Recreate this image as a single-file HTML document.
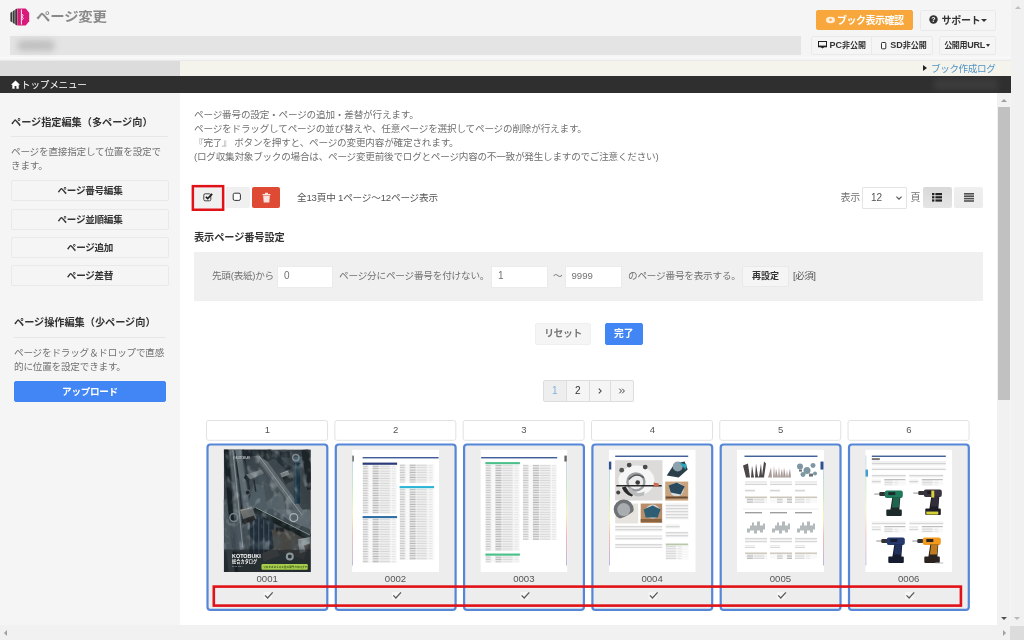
<!DOCTYPE html>
<html lang="ja">
<head>
<meta charset="utf-8">
<title>ページ変更</title>
<style>
*{box-sizing:border-box;margin:0;padding:0}
html,body{width:1024px;height:640px;overflow:hidden;background:#f5f5f5}
body{position:relative;font-family:"Liberation Sans","Noto Sans CJK JP",sans-serif;font-size:10px;color:#555;line-height:1}
#wrap{position:absolute;left:0;top:0;width:1024px;height:640px;overflow:hidden;will-change:transform}
.abs{position:absolute}
.btn{position:absolute;background:#f5f5f5;border:1px solid #e9e9e9;border-radius:2px;color:#333;font-weight:bold;text-align:center;white-space:nowrap}
.t{position:absolute;white-space:nowrap}
/* header */
#title{left:36px;top:8px;font-size:13px;font-weight:700;color:#8a8a8a;line-height:18px;letter-spacing:-.2px;transform:scaleX(1.11);transform-origin:0 0}
#graybar{left:10.4px;top:36px;width:791.1px;height:19.2px;background:#e4e4e4}
#blur{left:17px;top:40px;width:38px;height:11px;border-radius:6px;background:#c0c0c0;filter:blur(3px)}
#band-l{left:0;top:61px;width:179.5px;height:15px;background:#dcdcdc}
#band-r{left:179.5px;top:61px;width:831px;height:15px;background:#f5f4ec}
#dark{left:0;top:76px;width:1010.5px;height:16.8px;background:#2f2f2f;overflow:hidden}
#side{left:0;top:93px;width:179.5px;height:532px;background:#f5f5f5}
#main{left:179.5px;top:92.8px;width:818px;height:532.2px;background:#fff}
/* scrollbars */
#vs-in{left:997.4px;top:93px;width:13.1px;height:532px;background:#f1f1f1}
#vs-in .thumb{position:absolute;left:1px;top:14px;width:11.2px;height:293px;background:#c1c1c1}
#vs-out{left:1010.5px;top:0;width:13.5px;height:625px;background:#f1f1f1}
#hs{left:0;top:625px;width:1024px;height:15px;background:#f1f1f1}
#corner{left:1010.25px;top:626px;width:13.75px;height:14px;background:#dcdcdc}
.tri{position:absolute;width:0;height:0;border:3px solid transparent}
/* cards */
.num{position:absolute;top:420px;width:121.75px;height:20.6px;background:#fff;border:1px solid #e2e2e2;border-radius:2px;text-align:center;line-height:19px;font-size:9.5px;color:#555}
.card{position:absolute;top:443.3px;width:121.75px;height:167.7px;background:#ededed;border:2.3px solid #4f88de;border-radius:4px}
.card .pg{position:absolute;left:15.1px;top:4px;width:87px;height:122.5px;background:#fff;overflow:hidden}
.card .lbl{position:absolute;left:0;width:117.2px;top:128.5px;text-align:center;font-size:9px;line-height:10px;color:#555}
.card svg.ck{position:absolute;left:53.6px;top:145.5px}
</style>
</head>
<body>
<div id="wrap">
<!-- header -->
<svg class="abs" style="left:10px;top:7.5px" width="20" height="18" viewBox="0 0 20 18">
  <path d="M0.4 4.8L2.4 3.4V14.600L0.4 13.200Z" fill="#3a3a3a"/>
  <path d="M2.9 3.100L4.700 1.900V16.100L2.900 14.900Z" fill="#3a3a3a"/>
  <path d="M5.200 1.600L7 0.500V17.500L5.200 16.400Z" fill="#3a3a3a"/>
  <path d="M7.300 0.400H15.700L19.200 4.800V13.200L15.700 17.600H7.300Z" fill="#d81b7a"/>
  <path d="M11.400 1.500V16.500" stroke="#fff" stroke-width="1" opacity=".9" fill="none"/>
  <path d="M12 6.200q2.400.4 0 2.800q2.800.6 0 3" stroke="#fff" stroke-width=".9" opacity=".9" fill="none"/>
</svg>
<div class="t" id="title">ページ変更</div>
<div class="abs" id="graybar"></div>
<div class="abs" id="blur"></div>

<div class="btn" style="left:816px;top:10px;width:96.500px;height:20.300px;background:#f8a73c;border-color:#f8a73c;color:#fff;font-size:10px;line-height:19px;letter-spacing:-.5px;padding-left:12px">ブック表示確認</div>
<svg class="abs" style="left:826px;top:16px" width="9" height="8" viewBox="0 0 9 8"><ellipse cx="4.5" cy="4" rx="4.500" ry="3.200" fill="#fff" opacity=".8"/><circle cx="4.5" cy="3.800" r="1.300" fill="#f8a73c"/></svg>
<div class="btn" style="left:920px;top:10px;width:76px;height:21px;font-size:10px;line-height:19px;padding-left:6px;letter-spacing:-.3px">サポート</div>
<svg class="abs" style="left:929px;top:15px" width="9" height="9" viewBox="0 0 9 9"><circle cx="4.5" cy="4.5" r="4.2" fill="#333"/><text x="4.5" y="7.2" font-size="7" font-weight="bold" fill="#fff" text-anchor="middle" font-family="Liberation Sans, sans-serif">?</text></svg>
<div class="tri" style="left:981px;top:19px;border-top-color:#333;border-bottom-width:0"></div>

<div class="btn" style="left:811px;top:36px;width:61px;height:19px;font-size:8px;line-height:17px;padding-left:12.500px;border-radius:2px 0 0 2px"><span style="font-size:9px">PC</span>非公開</div>
<svg class="abs" style="left:818px;top:41px" width="9" height="8" viewBox="0 0 9 8"><rect x=".5" y=".5" width="8" height="5.200" fill="#f4f4f4" stroke="#222" stroke-width="1"/><rect x="0" y="4.600" width="9" height="1.500" fill="#222"/><path d="M2.600 6.100h3.800l-1.900 1.500z" fill="#222"/></svg>
<div class="btn" style="left:871px;top:36px;width:62px;height:19px;font-size:8px;line-height:17px;padding-left:13px;border-radius:0 2px 2px 0"><span style="font-size:9px">SD</span>非公開</div>
<svg class="abs" style="left:880.500px;top:41.500px" width="6" height="8" viewBox="0 0 6 8"><rect x=".5" y=".5" width="4.300" height="6.300" rx=".8" fill="#fff" stroke="#333" stroke-width="1"/></svg>
<div class="btn" style="left:939px;top:36px;width:57px;height:19px;font-size:8px;line-height:17px;padding-right:6px;letter-spacing:-.3px">公開用<span style="font-size:9px">URL</span></div>
<div class="tri" style="left:986px;top:44px;border-top-color:#333;border-bottom-width:0;border-width:3px 2.5px 0"></div>

<div class="abs" style="left:0;top:56.500px;width:1010.500px;height:1.500px;background:#fbfbfb"></div><div class="abs" style="left:0;top:60px;width:1010.500px;height:1px;background:#e9e9e9"></div>
<div class="abs" id="band-l"></div>
<div class="abs" id="band-r"></div>
<div class="tri" style="left:923px;top:65px;border-width:3px 0 3px 4px;border-left-color:#222"></div>
<div class="t" style="left:931px;top:62px;font-size:9.6px;line-height:13px;color:#4f93c4;letter-spacing:-.4px">ブック作成ログ</div>
<div class="abs" id="dark"><div class="abs" style="left:934px;top:3px;width:64px;height:11px;background:#3d3d3d;filter:blur(3px)"></div></div>
<svg class="abs" style="left:11px;top:80px" width="9" height="9" viewBox="0 0 9 9"><path d="M4.5 0.5 L0 4.8 H1.3 V8.7 H3.6 V6 H5.4 V8.7 H7.7 V4.8 H9 Z" fill="#fff"/></svg>
<div class="t" style="left:21px;top:78px;font-size:9.6px;line-height:13px;color:#fff;letter-spacing:-.2px">トップメニュー</div>

<!-- sidebar -->
<div class="abs" id="side"></div>
<div class="t" style="left:11px;top:115.7px;font-size:10.2px;line-height:14px;font-weight:bold;color:#333;letter-spacing:-.05px">ページ指定編集（多ページ向）</div>
<div class="abs" style="left:11px;top:136px;width:157px;height:1px;background:#e6e6e6"></div>
<div class="abs" style="left:11px;top:144.7px;width:165px;font-size:9.6px;line-height:14.3px;color:#717171;letter-spacing:-.2px">ページを直接指定して位置を設定で<br>きます。</div>
<div class="btn" style="left:11px;top:180px;width:158px;height:21px;font-size:9.6px;line-height:19px;letter-spacing:-.3px">ページ番号編集</div>
<div class="btn" style="left:11px;top:208.5px;width:158px;height:21px;font-size:9.6px;line-height:19px;letter-spacing:-.3px">ページ並順編集</div>
<div class="btn" style="left:11px;top:237px;width:158px;height:21px;font-size:9.6px;line-height:19px;letter-spacing:-.3px">ページ追加</div>
<div class="btn" style="left:11px;top:265px;width:158px;height:21px;font-size:9.6px;line-height:19px;letter-spacing:-.3px">ページ差替</div>
<div class="t" style="left:14px;top:315.7px;font-size:10.2px;line-height:14px;font-weight:bold;color:#333;letter-spacing:-.05px">ページ操作編集（少ページ向）</div>
<div class="abs" style="left:14px;top:337px;width:152px;height:1px;background:#e6e6e6"></div>
<div class="abs" style="left:14px;top:345.7px;width:165px;font-size:9.6px;line-height:14.3px;color:#717171;letter-spacing:-.2px">ページをドラッグ＆ドロップで直感<br>的に位置を設定できます。</div>
<div class="btn" style="left:14px;top:381px;width:152px;height:21px;background:#4285f4;border-color:#4285f4;color:#fff;font-size:9.6px;line-height:19px;letter-spacing:-.3px">アップロード</div>

<!-- main -->
<div class="abs" id="main"></div>
<div class="abs" style="left:194px;top:107.6px;width:700px;font-size:9.6px;line-height:14.3px;color:#717171;letter-spacing:-.18px;white-space:nowrap">ページ番号の設定・ページの追加・差替が行えます。<br>ページをドラッグしてページの並び替えや、任意ページを選択してページの削除が行えます。<br>『完了』 ボタンを押すと、ページの変更内容が確定されます。<br><span style="letter-spacing:-.23px">(ログ収集対象ブックの場合は、ページ変更前後でログとページ内容の不一致が発生しますのでご注意ください)</span></div>

<svg class="abs" style="left:190px;top:183px" width="37" height="30" viewBox="0 0 37 30"><rect x="2.850" y="3.150" width="30.300" height="23.600" fill="#f0f0f0" stroke="#e01218" stroke-width="2.500"/></svg>
<svg class="abs" style="left:203px;top:192px" width="10" height="10" viewBox="0 0 10 10"><rect x=".8" y="1.8" width="7" height="7" rx="1.3" fill="none" stroke="#444" stroke-width="1"/><path d="M2.800 4.800l1.900 1.700L9.200 1.800" stroke="#222" stroke-width="1.700" fill="none"/></svg>
<div class="abs" style="left:225.6px;top:187.3px;width:24.2px;height:21px;background:#f0f0f0;border-radius:0 2px 2px 0"></div>
<svg class="abs" style="left:232px;top:192px" width="10" height="10" viewBox="0 0 10 10"><rect x="1.2" y="1.2" width="7.2" height="7.2" rx="1.5" fill="#fff" stroke="#333" stroke-width="1"/></svg>
<div class="abs" style="left:252px;top:187.3px;width:28.3px;height:21px;background:#de4a33;border-radius:2px"></div>
<svg class="abs" style="left:262px;top:192px" width="9" height="11" viewBox="0 0 9 11"><path d="M0.5 2h8v1.2h-8zM3 0.7h3v1.3h-3zM1.2 3.8h6.6l-.5 6.7h-5.6z" fill="#fff" opacity=".85"/></svg>
<div class="t" style="left:297px;top:191px;font-size:9.6px;line-height:14px;color:#555;letter-spacing:-.18px">全13頁中 1ページ～12ページ表示</div>

<div class="t" style="left:840.500px;top:191px;font-size:10px;line-height:14px;color:#707070;letter-spacing:-.2px">表示</div>
<div class="abs" style="left:862px;top:187px;width:45px;height:22px;background:#fff;border:1px solid #e4e4e4;border-radius:1px"></div>
<div class="t" style="left:871px;top:192px;font-size:10px;line-height:12px;color:#555">12</div>
<svg class="abs" style="left:895px;top:195px" width="8" height="6" viewBox="0 0 8 6"><path d="M1.400 1.600l2.600 2.600 2.600-2.600" stroke="#555" stroke-width="1.100" fill="none"/></svg>
<div class="t" style="left:910.500px;top:191px;font-size:10px;line-height:14px;color:#707070">頁</div>
<div class="abs" style="left:922.600px;top:187.400px;width:29px;height:21.100px;background:linear-gradient(#d9d9d9,#e5e5e5);border-radius:2px"></div>
<svg class="abs" style="left:932px;top:193px" width="10" height="9" viewBox="0 0 10 9"><g fill="#222"><rect x="0" y="0" width="2.4" height="2.2"/><rect x="3.4" y="0" width="6.6" height="2.2"/><rect x="0" y="3.2" width="2.4" height="2.2"/><rect x="3.4" y="3.2" width="6.6" height="2.2"/><rect x="0" y="6.4" width="2.4" height="2.2"/><rect x="3.4" y="6.4" width="6.6" height="2.2"/></g></svg>
<div class="abs" style="left:954.200px;top:187.400px;width:28.600px;height:21.100px;background:linear-gradient(#efefef,#ebebeb);border-radius:2px"></div>
<svg class="abs" style="left:964px;top:193px" width="10" height="9" viewBox="0 0 10 9"><g fill="#505050"><rect x="0" y="0" width="10" height="1.6"/><rect x="0" y="2.4" width="10" height="1.6"/><rect x="0" y="4.8" width="10" height="1.6"/><rect x="0" y="7.2" width="10" height="1.6"/></g></svg>

<div class="t" style="left:194px;top:230.7px;font-size:10.2px;line-height:14px;font-weight:bold;color:#333;letter-spacing:-.1px">表示ページ番号設定</div>
<div class="abs" style="left:194px;top:252px;width:789px;height:49px;background:#f0f0f0"></div>
<div class="t" style="left:212px;top:269px;font-size:9.6px;line-height:14px;color:#717171;letter-spacing:-.25px">先頭(表紙)から</div>
<div class="abs" style="left:277px;top:266px;width:56px;height:22px;background:#fff;border:1px solid #ebebeb"></div>
<div class="t" style="left:284px;top:270.300px;font-size:10px;line-height:12px;color:#717171">0</div>
<div class="t" style="left:339px;top:269px;font-size:9.6px;line-height:14px;color:#717171;letter-spacing:-.18px">ページ分にページ番号を付けない。</div>
<div class="abs" style="left:491px;top:266px;width:57px;height:22px;background:#fff;border:1px solid #ebebeb"></div>
<div class="t" style="left:498px;top:270.300px;font-size:10px;line-height:12px;color:#717171">1</div>
<div class="t" style="left:553px;top:269px;font-size:9.6px;line-height:14px;color:#717171">～</div>
<div class="abs" style="left:565px;top:266px;width:57px;height:22px;background:#fff;border:1px solid #ebebeb"></div>
<div class="t" style="left:571.500px;top:270.300px;font-size:9.600px;line-height:12px;color:#717171">9999</div>
<div class="t" style="left:628px;top:269px;font-size:9.6px;line-height:14px;color:#717171;letter-spacing:-.18px">のページ番号を表示する。</div>
<div class="btn" style="left:742px;top:266px;width:47px;height:21px;font-size:9px;line-height:19px">再設定</div>
<div class="t" style="left:793px;top:269px;font-size:9.6px;line-height:14px;color:#555;letter-spacing:-.5px">[必須]</div>

<div class="btn" style="left:535px;top:323px;width:56px;height:22px;font-size:9.8px;line-height:20px;color:#777;letter-spacing:-.4px;border-color:#efefef">リセット</div>
<div class="btn" style="left:605px;top:323px;width:37.500px;height:22px;background:#4285f4;border-color:#4285f4;color:#fff;font-size:9.8px;line-height:20px">完了</div>

<div class="abs" style="left:543px;top:380px;width:91px;height:22px;background:#f5f5f5;border:1px solid #ddd;border-radius:2px"></div>
<div class="abs" style="left:544px;top:381px;width:22px;height:20px;background:#eee"></div>
<div class="abs" style="left:566px;top:381px;width:1px;height:20px;background:#ddd"></div>
<div class="abs" style="left:589px;top:381px;width:1px;height:20px;background:#ddd"></div>
<div class="abs" style="left:610px;top:381px;width:1px;height:20px;background:#ddd"></div>
<div class="t" style="left:552px;top:385px;font-size:10px;line-height:12px;color:#7fb0e0">1</div>
<div class="t" style="left:575px;top:385px;font-size:10px;line-height:12px;color:#333">2</div>
<svg class="abs" style="left:597px;top:387px" width="6" height="8" viewBox="0 0 6 8"><path d="M1.800 1.600L4.100 4 1.800 6.400" stroke="#444" stroke-width="1.050" fill="none"/></svg>
<svg class="abs" style="left:618px;top:387px" width="8" height="8" viewBox="0 0 8 8"><path d="M1.300 1.700L3.500 4 1.300 6.300M4.200 1.700L6.400 4 4.200 6.300" stroke="#444" stroke-width="1" fill="none"/></svg>

<!-- CARDS -->
<!--CARDS-->
<svg width="0" height="0" style="position:absolute"><defs>
<pattern id="rw" width="40" height="2.45" patternUnits="userSpaceOnUse"><rect width="40" height="2.45" fill="#fafafa"/><rect x="0" y=".5" width="5.500" height="1.300" fill="#c6c6c6"/><rect x="10" y=".5" width="6" height="1.300" fill="#b4b4b4"/><rect x="16.500" y=".5" width="11" height="1.300" fill="#d6d6d6"/><rect x="29" y=".7" width="4" height="1" fill="#e4e4e4"/><rect y="2.250" width="40" height=".2" fill="#e6e6e6"/></pattern>
<pattern id="tx" width="80" height="1.500" patternUnits="userSpaceOnUse"><rect width="80" height=".7" fill="#cfcfcf"/></pattern>
<linearGradient id="rb" x1="0" y1="0" x2="0" y2="1"><stop offset="0" stop-color="#9bd"/><stop offset=".25" stop-color="#9d9"/><stop offset=".5" stop-color="#ee8"/><stop offset=".7" stop-color="#e88"/><stop offset="1" stop-color="#88c"/></linearGradient>
<filter id="nz" x="0" y="0" width="1" height="1"><feTurbulence type="fractalNoise" baseFrequency=".09 .07" numOctaves="2" seed="7"/><feColorMatrix type="matrix" values="0 0 0 0 0.07  0 0 0 0 0.1  0 0 0 0 0.12  -2.400 0 0 0 1.300"/></filter><filter id="nw" x="0" y="0" width="1" height="1"><feTurbulence type="fractalNoise" baseFrequency=".13 .1" numOctaves="2" seed="11"/><feColorMatrix type="matrix" values="0 0 0 0 0.62  0 0 0 0 0.68  0 0 0 0 0.72  0 2.400 0 0 -1.300"/></filter><filter id="bl" x="0" y="0" width="1" height="1"><feGaussianBlur stdDeviation=".45"/></filter><radialGradient id="cv" cx=".5" cy=".45" r=".75"><stop offset="0" stop-color="#6a777e" stop-opacity=".5"/><stop offset="1" stop-color="#1e2529" stop-opacity=".5"/></radialGradient>
</defs></svg>

<svg class="abs" style="left:0;top:0" width="1024" height="640" viewBox="0 0 1024 640">
<rect x="206.55" y="420.5" width="121" height="19.8" rx="2" fill="#fff" stroke="#e1e1e1" stroke-width="1"/>
<text x="267.40" y="433.4" font-size="9.5" fill="#555" text-anchor="middle" font-family="Liberation Sans, sans-serif">1</text>
<rect x="207.50" y="444.5" width="119.8" height="165.4" rx="3" fill="#ededed" stroke="#5586d8" stroke-width="2.2"/>
<svg x="223.80" y="449.6" width="87" height="122.4" viewBox="0 0 87 122.5" preserveAspectRatio="none"><rect width="87" height="122.5" fill="#4a565c"/>
<rect width="87" height="122.5" fill="url(#cv)"/>
<g fill="none" stroke-linecap="butt" filter="url(#bl)">
<path d="M2 -2L12 124" stroke="#1d252a" stroke-width="5"/>
<path d="M7.500 -2L18 100" stroke="#67747a" stroke-width="5"/>
<path d="M11.500 -2L22 100" stroke="#222b31" stroke-width="1.500"/>
<path d="M14 -2L26 80" stroke="#7a878d" stroke-width="6"/>
<path d="M19 -2L30 70" stroke="#2a343a" stroke-width="2"/>
<path d="M0 50L8 124" stroke="#5d6a70" stroke-width="6"/>
<path d="M36 58L62 62L58 40Z" fill="#6d7b82" stroke="none"/>
<path d="M24 56L44 66L40 36L30 34Z" fill="#64727a" stroke="none"/>
<path d="M33 4L78 66" stroke="#7b868b" stroke-width="8"/>
<path d="M31 7L74 66" stroke="#59656b" stroke-width="1.500"/>
<path d="M22 25L38 20L40 24L26 30Z" fill="#8b969a" stroke="none"/>
<path d="M22 25L26 30L24 33L20 28Z" fill="#222a2f" stroke="none"/>
<path d="M30 30L32 42" stroke="#2b353a" stroke-width="1.500"/>
<path d="M18 0h28l6 8l-8 4l-10-6l-14 2z" fill="#262e33" stroke="none"/>
<path d="M44 0L66 20" stroke="#2a3338" stroke-width="5"/>
<path d="M56 2h10v6h-10z" fill="#1c2226" stroke="none"/>
<path d="M73.500 12V54" stroke="#1e3a4b" stroke-width="5.500"/>
<path d="M72 12V54" stroke="#3f6075" stroke-width="1.200"/>
<path d="M70 7h8v6h-8z" fill="#5b7686" stroke="none"/>
<path d="M81 0L87 40" stroke="#222a2f" stroke-width="7"/>
<path d="M57 25l8-3 5 9-8 4z" fill="#2a2f31" stroke="none"/>
<path d="M56 24l8-3 2 4-8 3z" fill="#9a9f9e" stroke="none"/>
<path d="M50 60h37v20l-20-8z" fill="#7a878d" stroke="none"/>
<path d="M26 66h24v40h-24z" fill="#27343f" stroke="none"/>
<path d="M30 68v36M35 68v36M40 70v34M45 72v32" stroke="#5a6e7c" stroke-width="1"/>
<path d="M0 74h24v28h-24z" fill="#5a676e" stroke="none" opacity=".8"/>
<path d="M30 60L86 88" stroke="#1f2528" stroke-width="6.500"/>
<path d="M31 57.500L86 85" stroke="#6f7b80" stroke-width="1"/>
<path d="M16 60l12-3 5 12-12 5z" fill="#8d8e88" stroke="none"/>
<path d="M18 70l12-4 2 4-12 5z" fill="#2b2c2b" stroke="none"/>
<path d="M48 80l20 2 18 12-6 16-30-10z" fill="#59544f" stroke="none"/>
<path d="M52 78h8v4h-8z" fill="#2a2a2a" stroke="none"/>
<path d="M74 90l12-2v6l-6 2 2 6-6 2z" fill="#a1acaf" stroke="none"/>
<path d="M38 104l14-6 4 8-16 6z" fill="#6e6a66" stroke="none"/>
<path d="M0 100h87v22.500h-87z" fill="#20272b" stroke="none" opacity=".55"/>
</g>
<rect width="87" height="122.5" fill="#0c1418" opacity=".22"/>
<rect width="87" height="100" filter="url(#nz)" opacity=".8"/>
<rect width="87" height="100" filter="url(#nw)" opacity=".5"/>
<g fill="none" stroke="#b4bec2" stroke-width=".7" opacity=".75"><path d="M35 6L78 65"/><path d="M9 0L19 98"/><path d="M32 58L86 85.500"/><path d="M57 24l8-3"/><path d="M17 61l11-3"/><path d="M75 90l11-2"/></g>
<circle cx="10" cy="68" r="4" fill="none" stroke="#76838a" stroke-width="1.600"/>
<circle cx="66" cy="107" r="3" fill="#2a3034" stroke="#8b979c" stroke-width="2"/>
<circle cx="72" cy="8" r="3.200" fill="none" stroke="#7f8b90" stroke-width="1.500"/>
<circle cx="70" cy="68" r="4" fill="none" stroke="#aab4b8" stroke-width="1.200"/>
<circle cx="24" cy="43" r="2.500" fill="#1f272c" stroke="#5e6a70" stroke-width="1"/>
<text x="8.300" y="108" font-size="5.400" font-weight="bold" fill="#fff" font-family="Liberation Sans, sans-serif">KOTOBUKI</text>
<text x="8.300" y="113.800" font-size="4.200" font-weight="bold" fill="#f4f4f4" font-family="Liberation Sans, Noto Sans CJK JP, sans-serif">総合カタログ</text>
<text x="8.300" y="118" font-size="2.200" fill="#aab" font-family="Liberation Sans, sans-serif">2023-2024</text>
<rect x="37.700" y="114.600" width="46.300" height="5.600" rx="1.200" fill="#a8cd4a"/>
<text x="39.500" y="118.600" font-size="2.600" font-weight="bold" fill="#2e4d1a" font-family="Liberation Sans, Noto Sans CJK JP, sans-serif">プロをささえる工具の専門カタログです</text>
<text x="9" y="9" font-size="2.800" fill="#e6ecef" font-family="Liberation Sans, sans-serif">◎KOTOBUKI</text></svg>
<text x="267.20" y="581.9" font-size="9.6" fill="#555" text-anchor="middle" font-family="Liberation Sans, sans-serif">0001</text>
<rect x="263.60" y="591.9" width="8.2" height="7.6" rx="1" fill="#fff" opacity=".5"/>
<path d="M265.00 595.4l2.6 2.6 5.1-5.7" stroke="#5a5a5a" stroke-width="1.25" fill="none"/>
<rect x="334.85" y="420.5" width="121" height="19.8" rx="2" fill="#fff" stroke="#e1e1e1" stroke-width="1"/>
<text x="395.70" y="433.4" font-size="9.5" fill="#555" text-anchor="middle" font-family="Liberation Sans, sans-serif">2</text>
<rect x="335.80" y="444.5" width="119.8" height="165.4" rx="3" fill="#ededed" stroke="#5586d8" stroke-width="2.2"/>
<svg x="352.10" y="449.6" width="87" height="122.4" viewBox="0 0 87 122.5" preserveAspectRatio="none"><rect width="87" height="122.5" fill="#fff"/>
<rect x="0" y="6" width="1.8" height="6" fill="#777"/>
<rect x="0.3" y="12" width="0.6" height="104" fill="url(#rb)"/>
<rect x="10.5" y="7.5" width="76" height="1.3" fill="#2f4f8f"/>
<g transform="translate(10.5 13)"><rect width="34.5" height="2.2" fill="#2b3a78"/><rect y="2.6" width="34.5" height="48.4" fill="url(#rw)"/></g><g transform="translate(10.5 66.5)"><rect width="34.5" height="2.2" fill="#2e6da4"/><rect y="2.6" width="34.5" height="44.4" fill="url(#rw)"/></g><g transform="translate(47.5 12)"><rect width="34.5" height="2.2" fill="#fff"/><rect y="2.6" width="34.5" height="18.4" fill="url(#rw)"/></g><g transform="translate(47.5 36.5)"><rect width="34.5" height="2.2" fill="#29b6d6"/><rect y="2.6" width="34.5" height="71.4" fill="url(#rw)"/></g></svg>
<text x="395.50" y="581.9" font-size="9.6" fill="#555" text-anchor="middle" font-family="Liberation Sans, sans-serif">0002</text>
<rect x="391.90" y="591.9" width="8.2" height="7.6" rx="1" fill="#fff" opacity=".5"/>
<path d="M393.30 595.4l2.6 2.6 5.1-5.7" stroke="#5a5a5a" stroke-width="1.25" fill="none"/>
<rect x="463.15" y="420.5" width="121" height="19.8" rx="2" fill="#fff" stroke="#e1e1e1" stroke-width="1"/>
<text x="524.00" y="433.4" font-size="9.5" fill="#555" text-anchor="middle" font-family="Liberation Sans, sans-serif">3</text>
<rect x="464.10" y="444.5" width="119.8" height="165.4" rx="3" fill="#ededed" stroke="#5586d8" stroke-width="2.2"/>
<svg x="480.40" y="449.6" width="87" height="122.4" viewBox="0 0 87 122.5" preserveAspectRatio="none"><rect width="87" height="122.5" fill="#fff"/>
<rect x="84" y="6" width="2.4" height="6" fill="#666"/>
<rect x="86" y="12" width="0.6" height="104" fill="url(#rb)"/>
<rect x="0.8" y="7.5" width="76" height="1.3" fill="#2f4f8f"/>
<g transform="translate(5 12.5)"><rect width="34.5" height="2.2" fill="#4cc08a"/><rect y="2.6" width="34.5" height="86.4" fill="url(#rw)"/></g><g transform="translate(5 104)"><rect width="34.5" height="2.2" fill="#4cc08a"/><rect y="2.6" width="34.5" height="6.4" fill="url(#rw)"/></g><g transform="translate(42.5 12.5)"><rect width="34" height="2.2" fill="#fff"/><rect y="2.6" width="34" height="75.4" fill="url(#rw)"/></g></svg>
<text x="523.80" y="581.9" font-size="9.6" fill="#555" text-anchor="middle" font-family="Liberation Sans, sans-serif">0003</text>
<rect x="520.20" y="591.9" width="8.2" height="7.6" rx="1" fill="#fff" opacity=".5"/>
<path d="M521.60 595.4l2.6 2.6 5.1-5.7" stroke="#5a5a5a" stroke-width="1.25" fill="none"/>
<rect x="591.45" y="420.5" width="121" height="19.8" rx="2" fill="#fff" stroke="#e1e1e1" stroke-width="1"/>
<text x="652.30" y="433.4" font-size="9.5" fill="#555" text-anchor="middle" font-family="Liberation Sans, sans-serif">4</text>
<rect x="592.40" y="444.5" width="119.8" height="165.4" rx="3" fill="#ededed" stroke="#5586d8" stroke-width="2.2"/>
<svg x="608.70" y="449.6" width="87" height="122.4" viewBox="0 0 87 122.5" preserveAspectRatio="none"><rect width="87" height="122.5" fill="#fff"/>
<rect x="0" y="12" width="2.6" height="8" fill="#2f4f8f"/>
<rect x="0.3" y="20" width="0.6" height="96" fill="url(#rb)"/>
<rect x="6.5" y="6" width="73" height="1.3" fill="#2f4f8f"/>
<rect x="6.4" y="10.6" width="47.4" height="40.4" fill="#dcdbd9"/>
<ellipse cx="27.7" cy="31" rx="18" ry="15" fill="#f6f6f6"/>
<path d="M8 36h20v8q-10-2-14-8z" fill="#dcdbd9"/>
<circle cx="27.2" cy="32.4" r="8.500" fill="#ececec" stroke="#9a9da0" stroke-width="2.400"/>
<path d="M20 30q7-8 15-2" stroke="#555" stroke-width="1.500" fill="none"/>
<circle cx="29" cy="33" r="2.300" fill="#3a3a3a"/>
<path d="M7.600 36.200h45.400" stroke="#2a2a2a" stroke-width="1.500"/>
<path d="M13 38q3 7 10 9l2-2q-6-3-8-8z" fill="#2a2a2a"/>
<path d="M22 38q4 8 14 4l-1 4q-10 3-16-5z" fill="#b8babc"/>
<circle cx="20.500" cy="15.500" r="2.400" fill="#4a4a4a"/><circle cx="36.500" cy="17.500" r="2.400" fill="#4a4a4a"/><circle cx="13" cy="20.600" r="2.400" fill="#555"/><circle cx="9.500" cy="43" r="2" fill="#444"/>
<path d="M45 33l5 1v3h-5z" fill="#c86a50"/>
<rect x="56.5" y="10" width="23" height="19" fill="#fff"/>
<path d="M58 26l8-12 10-2 3 8-9 8z" fill="#2a3f4a"/><circle cx="69" cy="17" r="5" fill="#8fa3ad"/><path d="M70 13l8 2-1 5z" fill="#2aa7b8"/>
<rect x="56.5" y="32" width="23" height="19" fill="#c9a37e"/>
<circle cx="68" cy="40" r="7" fill="#d8dde0"/><path d="M60 36l8-3 8 4-4 8-10-2z" fill="#2b4a5e"/><path d="M57 48h22" stroke="#6a4a30" stroke-width="2"/>
<rect x="6.500" y="54" width="23" height="19.5" fill="#e7e4df"/>
<circle cx="15" cy="60" r="10" fill="#6e7275"/><circle cx="15" cy="60" r="6.500" fill="#a9adb0"/><path d="M7 70q12-2 22-12v16h-22z" fill="#e7e4df"/>
<rect x="32" y="54" width="21.5" height="19.5" fill="#b98d68"/>
<circle cx="44" cy="62" r="7" fill="#d0d6da"/><path d="M35 60l9-4 8 4-3 8-12 0z" fill="#2f5e74"/><path d="M32 71h21" stroke="#8a6440" stroke-width="3"/>
<rect x="6.500" y="76" width="47" height="6" fill="url(#tx)"/>
<rect x="6.500" y="86" width="47" height="4.5" fill="url(#tx)"/>
<rect x="6.500" y="94" width="47" height="4.5" fill="url(#tx)"/>
<rect x="57" y="54" width="22.500" height="16" fill="url(#tx)"/>
<rect x="57" y="75" width="14" height="4" fill="url(#tx)"/>
<rect x="57" y="82" width="22.500" height="6" fill="url(#tx)"/>
<rect x="57" y="94" width="22.500" height="2" fill="#b7c7a8"/>
<rect x="57" y="96" width="22.500" height="14" fill="url(#rw)"/></svg>
<text x="652.10" y="581.9" font-size="9.6" fill="#555" text-anchor="middle" font-family="Liberation Sans, sans-serif">0004</text>
<rect x="648.50" y="591.9" width="8.2" height="7.6" rx="1" fill="#fff" opacity=".5"/>
<path d="M649.90 595.4l2.6 2.6 5.1-5.7" stroke="#5a5a5a" stroke-width="1.25" fill="none"/>
<rect x="719.75" y="420.5" width="121" height="19.8" rx="2" fill="#fff" stroke="#e1e1e1" stroke-width="1"/>
<text x="780.60" y="433.4" font-size="9.5" fill="#555" text-anchor="middle" font-family="Liberation Sans, sans-serif">5</text>
<rect x="720.70" y="444.5" width="119.8" height="165.4" rx="3" fill="#ededed" stroke="#5586d8" stroke-width="2.2"/>
<svg x="737.00" y="449.6" width="87" height="122.4" viewBox="0 0 87 122.5" preserveAspectRatio="none"><rect width="87" height="122.5" fill="#fff"/>
<rect x="83.500" y="12" width="3" height="8" fill="#2f4f8f"/>
<rect x="86" y="20" width="0.6" height="96" fill="url(#rb)"/>
<rect x="7.500" y="6" width="73" height="1.3" fill="#2f4f8f"/>
<g fill="#4c4648"><path d="M11 14l2 14h1l1-12 2 12h1l1-14 2 13h1l2-13 1 12 2-14 2 2-2 14h-18l-3-12z"/></g>
<g fill="#a89a96"><path d="M34 18l1 10h1l1-12 1 12 1-9 2 9 1-11 1 11 2-9 1 9 1-10 2 10 1-8 1 8 2-9 1 9h-23z"/></g>
<g fill="#7f97a3"><circle cx="63" cy="17" r="3"/><circle cx="70" cy="21" r="3.500"/><circle cx="76" cy="16" r="2.500"/><circle cx="66" cy="25" r="2.500"/><circle cx="78" cy="24" r="2"/></g>
<g fill="#6c7479"><rect x="62" y="20" width="3" height="2"/><rect x="72" y="24" width="4" height="3"/></g>
<rect x="8" y="32" width="22" height="3.5" fill="url(#tx)"/><rect x="8" y="39.5" width="10" height="3" fill="url(#tx)"/><rect x="8" y="47" width="22" height="1.4" fill="#c8c3b4"/><rect x="8" y="48.4" width="22" height="5" fill="url(#rw)"/><rect x="33" y="32" width="22" height="3.5" fill="url(#tx)"/><rect x="33" y="39.5" width="10" height="3" fill="url(#tx)"/><rect x="33" y="47" width="22" height="1.4" fill="#c8c3b4"/><rect x="33" y="48.4" width="22" height="5" fill="url(#rw)"/><rect x="58" y="32" width="22" height="3.5" fill="url(#tx)"/><rect x="58" y="39.5" width="10" height="3" fill="url(#tx)"/><rect x="58" y="47" width="22" height="1.4" fill="#c8c3b4"/><rect x="58" y="48.4" width="22" height="5" fill="url(#rw)"/>
<path d="M6 59.500h76" stroke="#e3e3e3" stroke-width=".6"/>
<rect x="8" y="62.500" width="17" height="1.300" fill="#999"/><rect x="33" y="62.500" width="17" height="1.300" fill="#999"/><rect x="58" y="62.500" width="17" height="1.300" fill="#999"/>
<g fill="#b4b9bc" transform="translate(0 1)">
<path d="M10 78h3v-3h2v-3h2v3h3v-4h3v4h3v-2h2v6h-2v3h-3v-2h-3v3h-3v-3h-4v2h-3z"/>
<path d="M35 78h3v-3h2v-3h2v3h3v-4h3v4h3v-2h2v6h-2v3h-3v-2h-3v3h-3v-3h-4v2h-3z"/>
<path d="M60 78h3v-3h2v-3h2v3h3v-4h3v4h3v-2h2v6h-2v3h-3v-2h-3v3h-3v-3h-4v2h-3z"/>
</g>
<rect x="8" y="88" width="22" height="5" fill="url(#tx)"/><rect x="8" y="95.5" width="10" height="3" fill="url(#tx)"/><rect x="8" y="103" width="22" height="1.4" fill="#c8c3b4"/><rect x="8" y="104.4" width="22" height="5" fill="url(#rw)"/><rect x="33" y="88" width="22" height="5" fill="url(#tx)"/><rect x="33" y="95.5" width="10" height="3" fill="url(#tx)"/><rect x="33" y="103" width="22" height="1.4" fill="#c8c3b4"/><rect x="33" y="104.4" width="22" height="5" fill="url(#rw)"/><rect x="58" y="88" width="22" height="5" fill="url(#tx)"/><rect x="58" y="95.5" width="10" height="3" fill="url(#tx)"/><rect x="58" y="103" width="22" height="1.4" fill="#c8c3b4"/><rect x="58" y="104.4" width="22" height="5" fill="url(#rw)"/></svg>
<text x="780.40" y="581.9" font-size="9.6" fill="#555" text-anchor="middle" font-family="Liberation Sans, sans-serif">0005</text>
<rect x="776.80" y="591.9" width="8.2" height="7.6" rx="1" fill="#fff" opacity=".5"/>
<path d="M778.20 595.4l2.6 2.6 5.1-5.7" stroke="#5a5a5a" stroke-width="1.25" fill="none"/>
<rect x="848.05" y="420.5" width="121" height="19.8" rx="2" fill="#fff" stroke="#e1e1e1" stroke-width="1"/>
<text x="908.90" y="433.4" font-size="9.5" fill="#555" text-anchor="middle" font-family="Liberation Sans, sans-serif">6</text>
<rect x="849.00" y="444.5" width="119.8" height="165.4" rx="3" fill="#ededed" stroke="#5586d8" stroke-width="2.2"/>
<svg x="865.30" y="449.6" width="87" height="122.4" viewBox="0 0 87 122.5" preserveAspectRatio="none"><rect width="87" height="122.5" fill="#fff"/>
<rect x="0" y="20" width="2.600" height="7" fill="#2f8fd0"/>
<rect x="0.300" y="6" width="0.600" height="110" fill="url(#rb)"/>
<rect x="6.500" y="6" width="74" height="1.300" fill="#2f4f8f"/>
<rect x="6.500" y="8.500" width="8" height="2" fill="#777"/>
<rect x="6.500" y="11.500" width="74" height="4.500" fill="url(#tx)"/>
<rect x="6.500" y="18" width="74" height="2.500" fill="url(#tx)"/>
<rect x="6.500" y="25" width="34" height="3" fill="url(#tx)"/><rect x="44" y="25" width="34" height="3" fill="url(#tx)"/>
<rect x="6.500" y="30" width="9" height="4" fill="url(#tx)"/><rect x="19" y="29.500" width="21" height="1.300" fill="#bbb"/><rect x="19" y="30.800" width="21" height="5" fill="url(#rw)"/>
<rect x="44" y="30" width="9" height="4" fill="url(#tx)"/><rect x="56.500" y="29.500" width="21" height="1.300" fill="#bbb"/><rect x="56.500" y="30.800" width="21" height="5" fill="url(#rw)"/>
<g transform="translate(9 41)">
<path d="M0 3.500h6" stroke="#777" stroke-width=".8"/>
<rect x="5" y="1.500" width="6" height="4" rx="1" fill="#333"/>
<rect x="10.500" y="0" width="18" height="7.500" rx="2" fill="#1f7a5c"/>
<rect x="14" y="1.500" width="7" height="3" fill="#1d2a2a"/>
<path d="M18 7l-2 13h9l1-13z" fill="#1d2a2a"/>
<path d="M19 7l-1.500 10h7l1-10z" fill="#1f7a5c" opacity=".75"/>
<rect x="12" y="19" width="15.500" height="6.500" rx="1" fill="#1d2a2a"/>
</g><g transform="translate(48 40)">
<path d="M0 3.500h6" stroke="#777" stroke-width=".8"/>
<rect x="5" y="1.500" width="6" height="4" rx="1" fill="#333"/>
<rect x="10.500" y="0" width="18" height="7.500" rx="2" fill="#3a3340"/>
<rect x="14" y="1.500" width="7" height="3" fill="#1e1c26"/>
<path d="M18 7l-2 13h9l1-13z" fill="#1e1c26"/>
<path d="M19 7l-1.500 10h7l1-10z" fill="#3a3340" opacity=".75"/>
<rect x="12" y="19" width="15.500" height="6.500" rx="1" fill="#1e1c26"/>
</g>
<rect x="66" y="41" width="3" height="7" fill="#d8d23a"/><rect x="61" y="62" width="12" height="3" fill="#d8d23a"/>
<rect x="6.500" y="72" width="34" height="3" fill="url(#tx)"/><rect x="44" y="72" width="34" height="3" fill="url(#tx)"/>
<rect x="6.500" y="77" width="9" height="4" fill="url(#tx)"/><rect x="19" y="76.500" width="21" height="1.300" fill="#bbb"/><rect x="19" y="77.800" width="21" height="5" fill="url(#rw)"/>
<rect x="44" y="77" width="9" height="4" fill="url(#tx)"/><rect x="56.500" y="76.500" width="21" height="1.300" fill="#bbb"/><rect x="56.500" y="77.800" width="21" height="5" fill="url(#rw)"/>
<g transform="translate(11 88)">
<path d="M0 3.500h6" stroke="#777" stroke-width=".8"/>
<rect x="5" y="1.500" width="6" height="4" rx="1" fill="#333"/>
<rect x="10.500" y="0" width="18" height="7.500" rx="2" fill="#25386e"/>
<rect x="14" y="1.500" width="7" height="3" fill="#161c30"/>
<path d="M18 7l-2 13h9l1-13z" fill="#161c30"/>
<path d="M19 7l-1.500 10h7l1-10z" fill="#25386e" opacity=".75"/>
<rect x="12" y="19" width="15.500" height="6.500" rx="1" fill="#161c30"/>
</g><g transform="translate(47 88)">
<path d="M0 3.500h6" stroke="#777" stroke-width=".8"/>
<rect x="5" y="1.500" width="6" height="4" rx="1" fill="#333"/>
<rect x="10.500" y="0" width="18" height="7.500" rx="2" fill="#f39a1e"/>
<rect x="14" y="1.500" width="7" height="3" fill="#2a2320"/>
<path d="M18 7l-2 13h9l1-13z" fill="#2a2320"/>
<path d="M19 7l-1.500 10h7l1-10z" fill="#f39a1e" opacity=".75"/>
<rect x="12" y="19" width="15.500" height="6.500" rx="1" fill="#2a2320"/>
</g>
<rect x="70" y="113" width="8" height="1" fill="#bbb"/></svg>
<text x="908.70" y="581.9" font-size="9.6" fill="#555" text-anchor="middle" font-family="Liberation Sans, sans-serif">0006</text>
<rect x="905.10" y="591.9" width="8.2" height="7.6" rx="1" fill="#fff" opacity=".5"/>
<path d="M906.50 595.4l2.6 2.6 5.1-5.7" stroke="#5a5a5a" stroke-width="1.25" fill="none"/>
<rect x="213.8" y="586.6" width="747.1" height="19" fill="none" stroke="#e01218" stroke-width="2.6"/>
</svg>
<!--/CARDS-->

<!-- red long box -->


<!-- scrollbars -->
<div class="abs" id="vs-in"><div class="thumb"></div>
  <div class="tri" style="left:3.4px;top:6px;border-width:0 3px 3px;border-bottom-color:#a0a0a0"></div>
  <div class="tri" style="left:3.600px;top:524px;border-width:3px 3px 0;border-top-color:#505050"></div>
</div>
<div class="abs" id="vs-out">
  <div class="tri" style="left:4px;top:6px;border-width:0 3px 3px;border-bottom-color:#c0c0c0"></div>
  <div class="tri" style="left:3.500px;top:617.200px;border-width:3px 3px 0;border-top-color:#b8b8b8"></div>
</div>
<div class="abs" id="hs">
  <div class="tri" style="left:4px;top:5px;border-width:3px 3px 3px 0;border-right-color:#a0a0a0"></div>
  <div class="tri" style="left:1003px;top:5.400px;border-width:3px 0 3px 3px;border-left-color:#a0a0a0"></div>
</div>
<div class="abs" id="corner"></div>
</div>
</body>
</html>
